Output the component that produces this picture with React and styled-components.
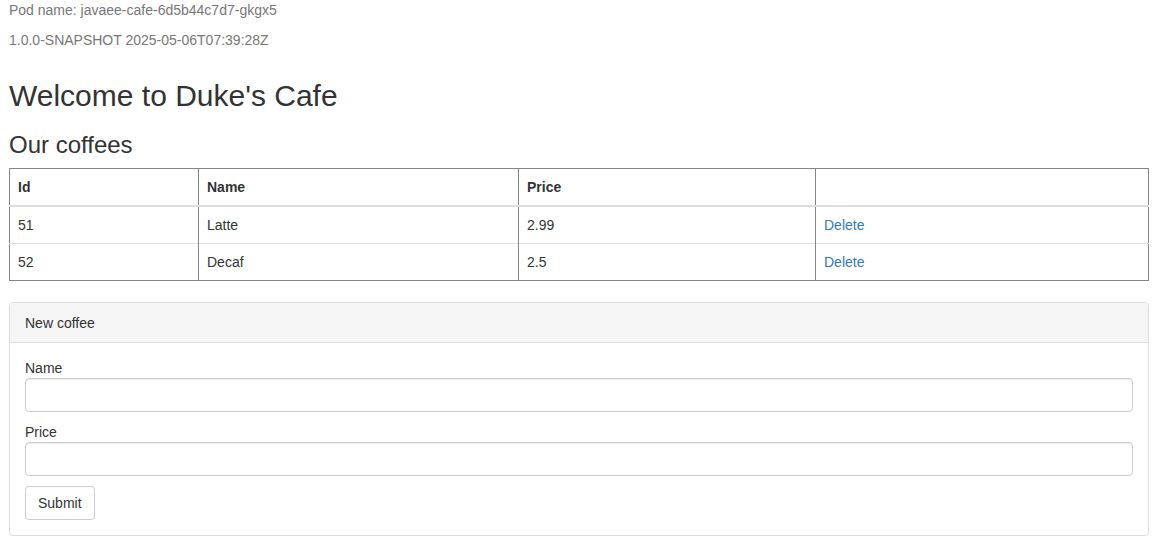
import React from "react";
import styled, { createGlobalStyle } from "styled-components";

const GlobalStyle = createGlobalStyle`
  * { box-sizing: border-box; }
  body {
    margin: 0;
    background: #fff;
    color: #333;
    font-family: "Liberation Sans", Arial, sans-serif;
    font-size: 14px;
    line-height: 20px;
  }
`;

const Page = styled.div`
  padding: 0 11px 0 9px;
`;

const Meta = styled.p`
  margin: 0 0 10px;
  color: #777;
`;

const Title = styled.h1`
  margin: 29px 0 0;
  font-size: 30px;
  font-weight: 400;
  line-height: 33px;
`;

const Subtitle = styled.h3`
  margin: 20px 0 10px;
  font-size: 24px;
  font-weight: 400;
  line-height: 26px;
`;

const Table = styled.table`
  width: 100%;
  border-collapse: collapse;
  border: 1px solid #858585;
  margin-bottom: 21px;
`;

const Cell = styled.td`
  padding: 8px;
  text-align: left;
  vertical-align: top;
  width: ${(p) => p.$w || "auto"};
  border-left: 1px solid #858585;
  border-top: 1px solid #ddd;
  font-weight: ${(p) => (p.$head ? 700 : 400)};
  height: 37px;
  &:first-child { border-left: none; }
`;

const HeadRow = styled.tr`
  & > th { border-top: none; border-bottom: 2px solid #ddd; }
`;

const Link = styled.a`
  color: #337ab7;
  text-decoration: none;
`;

const Panel = styled.div`
  border: 1px solid #ddd;
  border-radius: 4px;
  box-shadow: 0 1px 1px rgba(0, 0, 0, 0.05);
`;

const PanelHeading = styled.div`
  padding: 10px 15px 9px;
  background: #f5f5f5;
  border-bottom: 1px solid #ddd;
  border-radius: 3px 3px 0 0;
`;

const PanelBody = styled.form`
  padding: 15px;
  display: flex;
  flex-direction: column;
  align-items: flex-start;
`;

const Label = styled.label`
  display: block;
  margin-bottom: 0;
`;

const Field = styled.div`
  width: 100%;
  margin-bottom: 10px;
`;

const Input = styled.input`
  display: block;
  width: 100%;
  height: 34px;
  padding: 6px 12px;
  font: inherit;
  border: 1px solid #ccc;
  border-radius: 4px;
  box-shadow: inset 0 1px 1px rgba(0, 0, 0, 0.075);
  outline: none;
`;

const Button = styled.button`
  height: 34px;
  padding: 6px 12px;
  font: inherit;
  color: #333;
  background: #fff;
  border: 1px solid #ccc;
  border-radius: 4px;
`;

const coffees = [
  { id: 51, name: "Latte", price: "2.99" },
  { id: 52, name: "Decaf", price: "2.5" },
];

export default function App() {
  return (
    <Page>
      <GlobalStyle />
      <Meta>Pod name: javaee-cafe-6d5b44c7d7-gkgx5</Meta>
      <Meta>1.0.0-SNAPSHOT 2025-05-06T07:39:28Z</Meta>
      <Title>Welcome to Duke's Cafe</Title>
      <Subtitle>Our coffees</Subtitle>
      <Table>
        <thead>
          <HeadRow>
            <Cell as="th" $head $w="189px">Id</Cell>
            <Cell as="th" $head $w="320px">Name</Cell>
            <Cell as="th" $head $w="297px">Price</Cell>
            <Cell as="th" $head></Cell>
          </HeadRow>
        </thead>
        <tbody>
          {coffees.map((c) => (
            <tr key={c.id}>
              <Cell>{c.id}</Cell>
              <Cell>{c.name}</Cell>
              <Cell>{c.price}</Cell>
              <Cell>
                <Link href="#">Delete</Link>
              </Cell>
            </tr>
          ))}
        </tbody>
      </Table>
      <Panel>
        <PanelHeading>New coffee</PanelHeading>
        <PanelBody onSubmit={(e) => e.preventDefault()}>
          <Field>
            <Label>Name</Label>
            <Input type="text" />
          </Field>
          <Field>
            <Label>Price</Label>
            <Input type="text" />
          </Field>
          <Button type="submit">Submit</Button>
        </PanelBody>
      </Panel>
    </Page>
  );
}
